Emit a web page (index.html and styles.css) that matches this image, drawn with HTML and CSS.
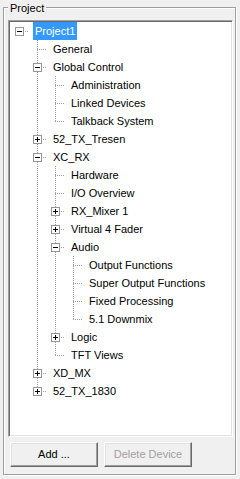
FILE: index.html
```html
<!DOCTYPE html>
<html>
<head>
<meta charset="utf-8">
<link rel="stylesheet" href="styles.css">
</head>
<body>
<div class="group">
  <div class="legend">Project</div>
  <div class="tree">
    <div class="row"><span class="c root"><span class="box minus"></span></span><span class="label sel">Project1</span></div>
    <div class="row"><span class="c"></span><span class="c tee"></span><span class="label">General</span></div>
    <div class="row"><span class="c"></span><span class="c tee"><span class="box minus"></span></span><span class="label">Global Control</span></div>
    <div class="row"><span class="c"></span><span class="c v"></span><span class="c tee"></span><span class="label">Administration</span></div>
    <div class="row"><span class="c"></span><span class="c v"></span><span class="c tee"></span><span class="label">Linked Devices</span></div>
    <div class="row"><span class="c"></span><span class="c v"></span><span class="c elbow"></span><span class="label">Talkback System</span></div>
    <div class="row"><span class="c"></span><span class="c tee"><span class="box plus"></span></span><span class="label">52_TX_Tresen</span></div>
    <div class="row"><span class="c"></span><span class="c tee"><span class="box minus"></span></span><span class="label">XC_RX</span></div>
    <div class="row"><span class="c"></span><span class="c v"></span><span class="c tee"></span><span class="label">Hardware</span></div>
    <div class="row"><span class="c"></span><span class="c v"></span><span class="c tee"></span><span class="label">I/O Overview</span></div>
    <div class="row"><span class="c"></span><span class="c v"></span><span class="c tee"><span class="box plus"></span></span><span class="label">RX_Mixer 1</span></div>
    <div class="row"><span class="c"></span><span class="c v"></span><span class="c tee"><span class="box plus"></span></span><span class="label">Virtual 4 Fader</span></div>
    <div class="row"><span class="c"></span><span class="c v"></span><span class="c tee"><span class="box minus"></span></span><span class="label">Audio</span></div>
    <div class="row"><span class="c"></span><span class="c v"></span><span class="c v"></span><span class="c tee"></span><span class="label">Output Functions</span></div>
    <div class="row"><span class="c"></span><span class="c v"></span><span class="c v"></span><span class="c tee"></span><span class="label">Super Output Functions</span></div>
    <div class="row"><span class="c"></span><span class="c v"></span><span class="c v"></span><span class="c tee"></span><span class="label">Fixed Processing</span></div>
    <div class="row"><span class="c"></span><span class="c v"></span><span class="c v"></span><span class="c elbow"></span><span class="label">5.1 Downmix</span></div>
    <div class="row"><span class="c"></span><span class="c v"></span><span class="c tee"><span class="box plus"></span></span><span class="label">Logic</span></div>
    <div class="row"><span class="c"></span><span class="c v"></span><span class="c elbow"></span><span class="label">TFT Views</span></div>
    <div class="row"><span class="c"></span><span class="c tee"><span class="box plus"></span></span><span class="label">XD_MX</span></div>
    <div class="row"><span class="c"></span><span class="c elbow"><span class="box plus"></span></span><span class="label">52_TX_1830</span></div>
  </div>
  <div class="buttons">
    <div class="btn">Add ...</div>
    <div class="btn disabled">Delete Device</div>
  </div>
</div>
</body>
</html>
```
FILE: styles.css
```css
html, body {
  margin: 0;
  padding: 0;
}
body {
  width: 240px;
  height: 479px;
  overflow: hidden;
  background: #f0f0f0;
  font-family: "Liberation Sans", Arial, sans-serif;
  font-size: 11px;
  color: #000;
}
.group {
  margin: 7px 0 0 3px;
  width: 233px;
  height: 468px;
  box-sizing: border-box;
  border: 1px solid #a0a0a0;
  box-shadow: inset 1px 1px 0 #fff, 1px 1px 0 #fff;
  display: flex;
  flex-direction: column;
  align-items: flex-start;
}
.legend {
  margin: -6px 0 0 4px;
  padding: 0 2px;
  line-height: 13px;
  background: #f0f0f0;
}
.tree {
  margin: 5px 0 0 4px;
  width: 225px;
  height: 417px;
  box-sizing: border-box;
  padding: 1px;
  border: 1px solid;
  border-color: #a0a0a0 #fff #fff #a0a0a0;
  box-shadow: inset 1px 1px 0 #696969, inset -1px -1px 0 #e3e3e3;
  background: #fff;
}
.row {
  display: flex;
  height: 18px;
}
.c {
  display: block;
  flex: none;
  width: 18px;
  height: 18px;
  background-repeat: no-repeat;
}
.v {
  background-image: repeating-linear-gradient(to bottom, #a0a0a0 0 1px, transparent 1px 2px);
  background-size: 1px 18px;
  background-position: 9px 0;
}
.tee {
  background-image:
    repeating-linear-gradient(to bottom, #a0a0a0 0 1px, transparent 1px 2px),
    repeating-linear-gradient(to right, #a0a0a0 0 1px, transparent 1px 2px);
  background-size: 1px 18px, 9px 1px;
  background-position: 9px 0, 9px 9px;
}
.elbow {
  background-image:
    repeating-linear-gradient(to bottom, #a0a0a0 0 1px, transparent 1px 2px),
    repeating-linear-gradient(to right, #a0a0a0 0 1px, transparent 1px 2px);
  background-size: 1px 9px, 9px 1px;
  background-position: 9px 0, 9px 9px;
}
.root {
  background-image: repeating-linear-gradient(to right, #a0a0a0 0 1px, transparent 1px 2px);
  background-size: 9px 1px;
  background-position: 9px 9px;
}
.box {
  display: block;
  width: 9px;
  height: 9px;
  margin: 5px 0 0 5px;
  box-sizing: border-box;
  border: 1px solid #969696;
  background-color: #fff;
  background-repeat: no-repeat;
}
.minus {
  background-image: linear-gradient(#000, #000);
  background-size: 5px 1px;
  background-position: 1px 3px;
}
.plus {
  background-image: linear-gradient(#000, #000), linear-gradient(#000, #000);
  background-size: 5px 1px, 1px 5px;
  background-position: 1px 3px, 3px 1px;
}
.label {
  display: block;
  margin-left: 5px;
  padding: 0 2px;
  line-height: 18px;
  height: 18px;
  white-space: nowrap;
}
.sel {
  background: #3399ff;
  color: #fff;
}
.buttons {
  display: flex;
  gap: 6px;
  margin: 5px 0 0 6px;
}
.btn {
  width: 88px;
  height: 25px;
  box-sizing: border-box;
  border: 1px solid;
  border-color: #fff #696969 #696969 #fff;
  box-shadow: inset -1px -1px 0 #a0a0a0, inset 1px 1px 0 #e3e3e3;
  background: #f0f0f0;
  display: flex;
  align-items: center;
  justify-content: center;
  padding-bottom: 1px;
}
.disabled {
  color: #a0a0a0;
}
```
